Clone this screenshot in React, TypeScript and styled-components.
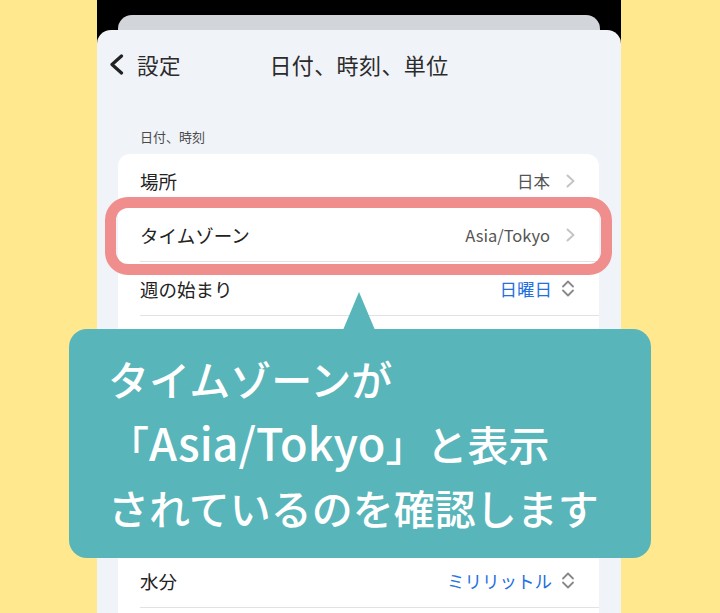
import React from "react";
import styled, { createGlobalStyle } from "styled-components";

const GlobalStyle = createGlobalStyle`
  html, body {
    margin: 0;
    padding: 0;
    background: #ffe88e;
    font-family: "Noto Sans CJK JP", "Noto Sans", sans-serif;
  }
  * { box-sizing: border-box; }
`;

const Page = styled.div`
  position: relative;
  width: 720px;
  height: 613px;
  overflow: hidden;
  background: #ffe88e;
  display: flex;
  justify-content: center;
`;

const Phone = styled.div`
  width: 524px;
  height: 613px;
  margin-left: -2px;
  background: #000;
  padding-top: 15px;
  display: flex;
  flex-direction: column;
`;

const BackCard = styled.div`
  flex-shrink: 0;
  height: 31px;
  margin: 0 21px -16px;
  background: #d2d5da;
  border-radius: 14px 14px 0 0;
`;

const Sheet = styled.div`
  flex: 1;
  min-height: 0;
  overflow: hidden;
  background: #f0f3f8;
  border-radius: 14px 14px 0 0;
  position: relative;
`;

const NavBar = styled.div`
  height: 74px;
  padding-bottom: 6px;
  display: grid;
  grid-template-columns: 1fr auto 1fr;
  align-items: center;
`;

const BackButton = styled.div`
  display: flex;
  align-items: center;
  gap: 13px;
  padding-left: 12px;
  font-size: 21.5px;
  color: #2b2b2b;
  letter-spacing: 0.5px;
`;

const Title = styled.div`
  font-size: 22px;
  color: #2b2b2b;
  letter-spacing: 0.4px;
`;

const SectionHeader = styled.div<{ $top?: number }>`
  padding: ${(p) => p.$top ?? 24}px 0 8px 43px;
  font-size: 13px;
  line-height: 18px;
  color: #4a4a4a;
`;

const Card = styled.div`
  margin: 0 22px 0 21px;
  background: #fff;
  border-radius: 12px;
`;

const Row = styled.div`
  position: relative;
  height: 54px;
  padding-left: 22px;
  display: flex;
`;

const RowInner = styled.div<{ $last?: boolean }>`
  flex: 1;
  display: flex;
  align-items: center;
  justify-content: space-between;
  padding-right: 24px;
  border-bottom: ${(p) => (p.$last ? "none" : "1px solid #e2e2e5")};
`;

const Label = styled.div`
  font-size: 18.5px;
  color: #222;
`;

const Value = styled.div`
  display: flex;
  align-items: center;
`;

const ValueText = styled.span<{ $blue?: boolean }>`
  font-size: ${(p) => (p.$blue ? 17.5 : 16.5)}px;
  color: ${(p) => (p.$blue ? "#2470df" : "#555")};
  margin-right: ${(p) => (p.$blue ? 9 : 16)}px;
`;

const Ring = styled.div`
  position: absolute;
  left: -13px;
  right: -13px;
  top: -11px;
  bottom: -13px;
  border: 11px solid #ef8e8c;
  border-radius: 23px;
  pointer-events: none;
  z-index: 2;
`;

const Callout = styled.div`
  position: absolute;
  left: 69px;
  top: 329px;
  width: 582px;
  height: 229px;
  background: #58b5b9;
  border-radius: 18px;
  padding: 17px 0 0 39px;
  color: #fff;
  font-family: "Noto Sans CJK JP", "Noto Sans", sans-serif;
  font-weight: 500;
  font-size: 41px;
  line-height: 64px;
  z-index: 5;

  &::before {
    content: "";
    position: absolute;
    left: 274px;
    top: -37px;
    border-left: 16px solid transparent;
    border-right: 16px solid transparent;
    border-bottom: 38px solid #58b5b9;
  }
`;

const CalloutLine = styled.div`
  white-space: nowrap;
`;

const Latin = styled.span`
  font-size: 45px;
`;

const Chevron = () => (
  <svg width="9" height="14" viewBox="0 0 9 14">
    <path d="M1.5 1.5 L7.5 7 L1.5 12.5" fill="none" stroke="#c4c4c8" strokeWidth="2" strokeLinecap="round" strokeLinejoin="round" />
  </svg>
);

const UpDown = () => (
  <svg width="14" height="17" viewBox="0 0 14 17">
    <path d="M2 6.5 L7 1.5 L12 6.5 M2 10.5 L7 15.5 L12 10.5" fill="none" stroke="#88888c" strokeWidth="1.8" strokeLinecap="round" strokeLinejoin="round" />
  </svg>
);

const BackChevron = () => (
  <svg width="15" height="21" viewBox="0 0 15 21">
    <path d="M12.5 2 L3 10.5 L12.5 19" fill="none" stroke="#222" strokeWidth="3.2" strokeLinecap="round" strokeLinejoin="round" />
  </svg>
);

type Item = { label: string; value: string; kind: "link" | "select" | "none"; highlight?: boolean };

// rows whose text sits under the callout are left blank
const section1: Item[] = [
  { label: "場所", value: "日本", kind: "link" },
  { label: "タイムゾーン", value: "Asia/Tokyo", kind: "link", highlight: true },
  { label: "週の始まり", value: "日曜日", kind: "select" },
  { label: "", value: "", kind: "none" },
];

const section2: Item[] = [
  { label: "", value: "", kind: "none" },
  { label: "", value: "", kind: "none" },
  { label: "水分", value: "ミリリットル", kind: "select" },
  { label: "", value: "", kind: "none" },
];

const Rows = ({ items, lastBorder }: { items: Item[]; lastBorder?: boolean }) => (
  <>
    {items.map((it, i) => (
      <Row key={i}>
        <RowInner $last={!lastBorder && i === items.length - 1}>
          <Label>{it.label}</Label>
          <Value>
            {it.value && <ValueText $blue={it.kind === "select"}>{it.value}</ValueText>}
            {it.kind === "link" && <Chevron />}
            {it.kind === "select" && <UpDown />}
          </Value>
        </RowInner>
        {it.highlight && <Ring />}
      </Row>
    ))}
  </>
);

export default function App() {
  return (
    <>
      <GlobalStyle />
      <Page>
        <Phone>
          <BackCard />
          <Sheet>
            <NavBar>
              <BackButton>
                <BackChevron />
                設定
              </BackButton>
              <Title>日付、時刻、単位</Title>
              <div />
            </NavBar>
            <SectionHeader>日付、時刻</SectionHeader>
            <Card>
              <Rows items={section1} />
            </Card>
            <SectionHeader $top={50}>単位</SectionHeader>
            <Card>
              <Rows items={section2} lastBorder />
            </Card>
          </Sheet>
        </Phone>
        <Callout>
          <CalloutLine>タイムゾーンが</CalloutLine>
          <CalloutLine>
            「<Latin>Asia/Tokyo</Latin>」と表示
          </CalloutLine>
          <CalloutLine>されているのを確認します</CalloutLine>
        </Callout>
      </Page>
    </>
  );
}
